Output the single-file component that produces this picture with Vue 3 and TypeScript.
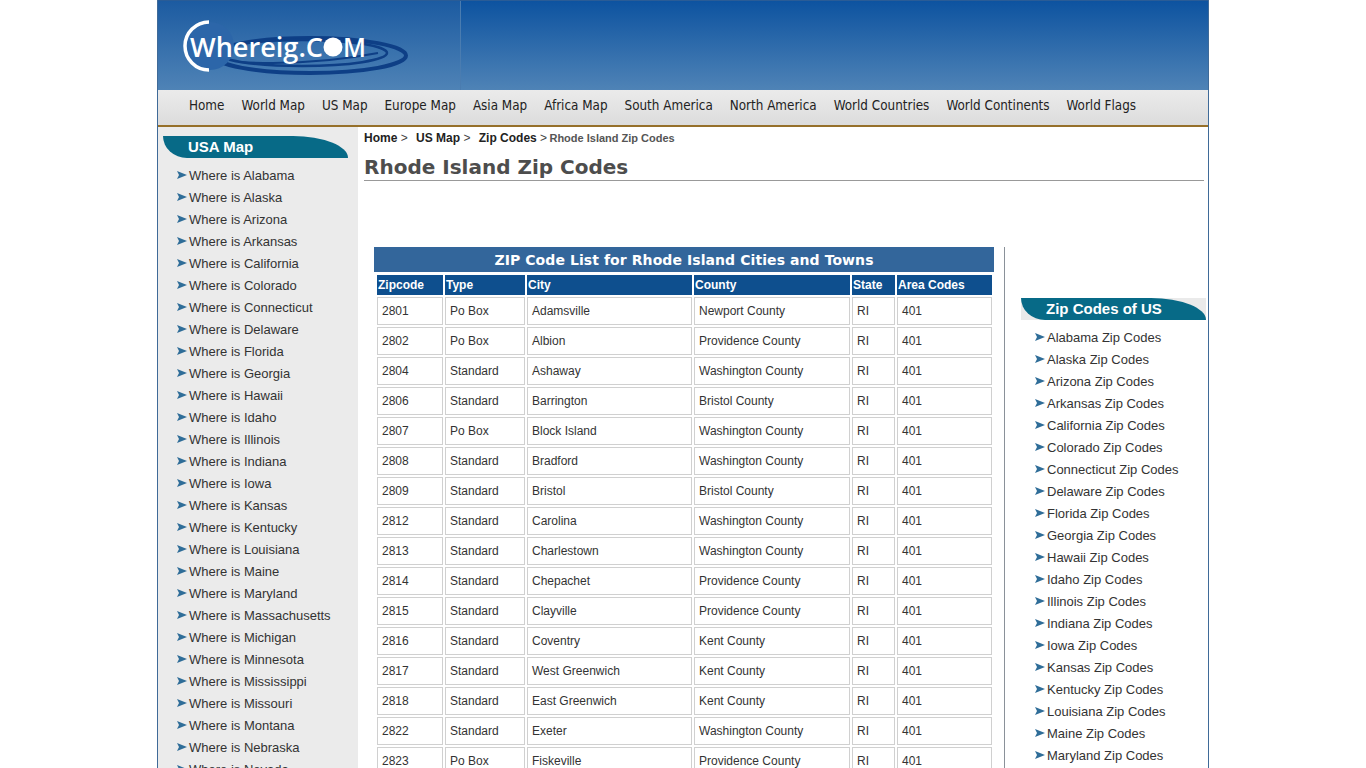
<script setup lang="ts">
const navLinks = ['Home', 'World Map', 'US Map', 'Europe Map', 'Asia Map', 'Africa Map', 'South America', 'North America', 'World Countries', 'World Continents', 'World Flags']

const leftStates = ['Alabama', 'Alaska', 'Arizona', 'Arkansas', 'California', 'Colorado', 'Connecticut', 'Delaware', 'Florida', 'Georgia', 'Hawaii', 'Idaho', 'Illinois', 'Indiana', 'Iowa', 'Kansas', 'Kentucky', 'Louisiana', 'Maine', 'Maryland', 'Massachusetts', 'Michigan', 'Minnesota', 'Mississippi', 'Missouri', 'Montana', 'Nebraska', 'Nevada']
const rightStates = leftStates.slice(0, 20)

// zip, type, city, county
const rows: [string, string, string, string][] = [
  ['2801', 'Po Box', 'Adamsville', 'Newport County'],
  ['2802', 'Po Box', 'Albion', 'Providence County'],
  ['2804', 'Standard', 'Ashaway', 'Washington County'],
  ['2806', 'Standard', 'Barrington', 'Bristol County'],
  ['2807', 'Po Box', 'Block Island', 'Washington County'],
  ['2808', 'Standard', 'Bradford', 'Washington County'],
  ['2809', 'Standard', 'Bristol', 'Bristol County'],
  ['2812', 'Standard', 'Carolina', 'Washington County'],
  ['2813', 'Standard', 'Charlestown', 'Washington County'],
  ['2814', 'Standard', 'Chepachet', 'Providence County'],
  ['2815', 'Standard', 'Clayville', 'Providence County'],
  ['2816', 'Standard', 'Coventry', 'Kent County'],
  ['2817', 'Standard', 'West Greenwich', 'Kent County'],
  ['2818', 'Standard', 'East Greenwich', 'Kent County'],
  ['2822', 'Standard', 'Exeter', 'Washington County'],
  ['2823', 'Po Box', 'Fiskeville', 'Providence County'],
]
</script>

<template>
  <div class="page">
    <header class="banner">
      <div class="logo-cell">
        <svg class="logo" width="240" height="70" viewBox="0 0 240 70">
          <g fill="none" stroke="#0e3f86">
            <ellipse cx="130" cy="40.5" rx="96" ry="17.5" stroke-width="4" />
            <ellipse cx="122" cy="38" rx="85" ry="13" stroke-width="2.5" />
            <path d="M60 47 Q130 51 198 38" stroke-width="2" />
          </g>
          <circle cx="30" cy="31" r="24" fill="#2c66a9" />
          <path d="M29 7 A24 24 0 0 0 29 55" fill="none" stroke="#fff" stroke-width="3.5" />
          <text x="10" y="42" class="logo-text" textLength="133" lengthAdjust="spacingAndGlyphs">Whereig.C</text>
          <circle cx="153" cy="32" r="9.5" fill="#fff" />
          <text x="163" y="42" class="logo-text" textLength="23" lengthAdjust="spacingAndGlyphs">M</text>
        </svg>
      </div>
    </header>

    <nav class="topnav">
      <a v-for="link in navLinks" :key="link">{{ link }}</a>
    </nav>

    <div class="body">
      <aside class="sidebar">
        <h3 class="side-head">USA Map</h3>
        <ul class="side-list">
          <li v-for="s in leftStates" :key="s">
            <svg class="arrow" width="10" height="8" viewBox="0 0 10 8"><polygon points="0,0 10,4 0,8 2,4" /></svg>
            <span>Where is {{ s }}</span>
          </li>
        </ul>
      </aside>

      <main class="content">
        <div class="crumbs">
          <a>Home</a><span class="sep"> &gt; </span>
          <a class="gap">US Map</a><span class="sep"> &gt; </span>
          <a class="gap">Zip Codes</a><span class="sep"> &gt; </span><span class="here">Rhode Island Zip Codes</span>
        </div>
        <h1 class="title">Rhode Island Zip Codes</h1>

        <div class="columns">
          <section class="table-col">
            <div class="table-title">ZIP Code List for Rhode Island Cities and Towns</div>
            <table class="zips">
              <colgroup>
                <col class="c-zip" />
                <col class="c-type" />
                <col class="c-city" />
                <col class="c-county" />
                <col class="c-state" />
                <col class="c-area" />
              </colgroup>
              <thead>
                <tr>
                  <th>Zipcode</th>
                  <th>Type</th>
                  <th>City</th>
                  <th>County</th>
                  <th>State</th>
                  <th>Area Codes</th>
                </tr>
              </thead>
              <tbody>
                <tr v-for="r in rows" :key="r[0]">
                  <td>{{ r[0] }}</td>
                  <td>{{ r[1] }}</td>
                  <td>{{ r[2] }}</td>
                  <td>{{ r[3] }}</td>
                  <td>RI</td>
                  <td>401</td>
                </tr>
              </tbody>
            </table>
          </section>

          <aside class="right-col">
            <h3 class="side-head right-head">Zip Codes of US</h3>
            <ul class="side-list">
              <li v-for="s in rightStates" :key="s">
                <svg class="arrow" width="10" height="8" viewBox="0 0 10 8"><polygon points="0,0 10,4 0,8 2,4" /></svg>
                <span>{{ s }} Zip Codes</span>
              </li>
            </ul>
          </aside>
        </div>
      </main>
    </div>
  </div>
</template>

<style>
html,
body {
  height: 768px;
  overflow: hidden;
  background: #fff;
}
</style>

<style scoped>
.page {
  width: 1050px;
  height: 768px;
  overflow: hidden;
  margin-left: 157px;
  border-left: 1px solid #3f6a98;
  border-right: 1px solid #3f6a98;
  font-family: "Liberation Sans", Arial, sans-serif;
  color: #333;
}

.banner {
  height: 90px;
  background: linear-gradient(#0d53a0, #4f83b6);
  border-top: 1px solid #2a5c96;
  box-sizing: border-box;
}

.logo-cell {
  width: 302px;
  height: 89px;
  background: linear-gradient(#1c5ba1, #4f83b6);
  border-right: 1px solid #4a7cb0;
}

.logo {
  display: block;
  position: relative;
  top: 14px;
  left: 22px;
}

.logo-text {
  font-family: "Open Sans", sans-serif;
  font-size: 27px;
  font-weight: 600;
  fill: #fff;
}

.topnav {
  height: 30px;
  padding: 0 0 5px 31px;
  display: flex;
  align-items: center;
  gap: 17px;
  background: linear-gradient(#ebebeb, #dcdcdc);
  border-bottom: 2px solid #96702a;
  font-family: "DejaVu Sans Condensed", "DejaVu Sans", sans-serif;
  font-stretch: condensed;
  font-size: 13.35px;
  color: #222;
  white-space: nowrap;
}

.body {
  display: flex;
}

.sidebar {
  width: 200px;
  flex-shrink: 0;
  height: 700px;
  padding: 9px 0 0 5px;
  box-sizing: border-box;
  background: #ebebeb;
}

.side-head {
  width: 185px;
  height: 22px;
  margin: 0;
  padding-left: 25px;
  box-sizing: border-box;
  background: #076a87;
  border-radius: 0 55px 0 24px / 0 22px 0 22px;
  color: #fff;
  font-size: 15px;
  font-weight: bold;
  line-height: 21px;
}

.side-list {
  list-style: none;
  margin: 6px 0 0;
  padding: 0 0 0 14px;
}

.side-list li {
  display: flex;
  align-items: center;
  gap: 2px;
  height: 22px;
  font-size: 13px;
  color: #333;
  white-space: nowrap;
}

.arrow {
  fill: #2f6d98;
  flex-shrink: 0;
}

.content {
  flex: 1;
  min-width: 0;
  padding: 0 4px 0 6px;
}

.crumbs {
  height: 22px;
  line-height: 22px;
  font-size: 12px;
  font-weight: bold;
  color: #222;
}

.sep {
  font-weight: normal;
  color: #444;
}

.gap {
  margin-left: 5px;
}

.here {
  margin-left: -1px;
  font-size: 11px;
  color: #555;
}

.title {
  margin: 0;
  height: 31px;
  line-height: 36px;
  font-family: "DejaVu Sans", Verdana, sans-serif;
  font-size: 20px;
  font-weight: bold;
  color: #4d4d4d;
  border-bottom: 1px solid #999;
  white-space: nowrap;
}

.columns {
  display: flex;
  margin-top: 66px;
}

.table-col {
  width: 620px;
  margin-left: 10px;
  flex-shrink: 0;
}

.table-title {
  height: 25px;
  line-height: 26px;
  text-align: center;
  background: #33669b;
  color: #fff;
  font-family: "DejaVu Sans", Verdana, sans-serif;
  font-size: 14px;
  font-weight: bold;
  letter-spacing: 0.08px;
}

.zips {
  table-layout: fixed;
  width: 619px;
  margin: 1px 0 0 1px;
  border-collapse: separate;
  border-spacing: 2px;
  font-size: 12px;
}

.c-zip { width: 66px; }
.c-type { width: 80px; }
.c-city { width: 165px; }
.c-county { width: 156px; }
.c-state { width: 43px; }
.c-area { width: 95px; }

.zips th {
  height: 20px;
  padding: 0 0 0 1px;
  text-align: left;
  background: #0e4f8e;
  color: #fff;
  font-weight: bold;
}

.zips td {
  height: 28px;
  padding: 0 0 0 4px;
  box-sizing: border-box;
  border: 1px solid #d0d0d0;
  color: #333;
}

.right-col {
  margin-left: 10px;
  padding-left: 16px;
  border-left: 1px solid #8a9199;
  flex: 1;
  padding-top: 51px;
}

.right-head {
  position: relative;
  background: #eaeaea;
  border-radius: 0;
  z-index: 0;
}

.right-head::before {
  content: "";
  position: absolute;
  inset: 0;
  z-index: -1;
  background: #076a87;
  border-radius: 0 55px 0 24px / 0 22px 0 22px;
}
</style>
